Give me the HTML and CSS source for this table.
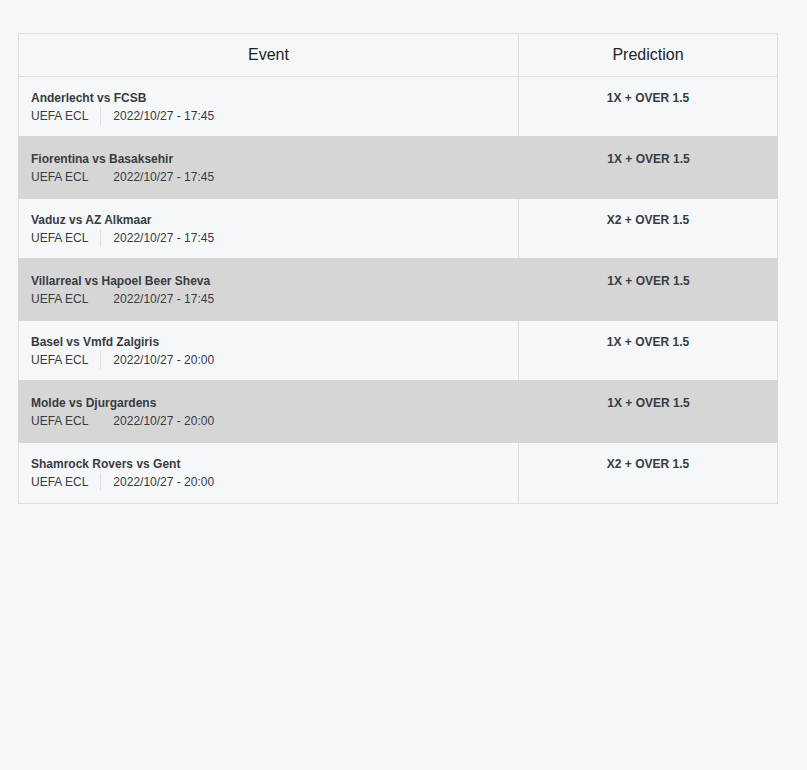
FILE: index.html
```html
<!DOCTYPE html>
<html>
<head>
<meta charset="utf-8">
<link rel="stylesheet" href="styles.css">
</head>
<body>
<div class="page">
  <div class="table">
    <div class="head">
      <div class="hcell event-col">Event</div>
      <div class="hcell pred-col">Prediction</div>
    </div>
    <div class="row">
      <div class="cell event-col"><div class="title">Anderlecht vs FCSB</div><div class="meta"><span class="league">UEFA ECL</span><span class="date">2022/10/27 - 17:45</span></div></div>
      <div class="cell pred-col">1X + OVER 1.5</div>
    </div>
    <div class="row alt">
      <div class="cell event-col"><div class="title">Fiorentina vs Basaksehir</div><div class="meta"><span class="league">UEFA ECL</span><span class="date">2022/10/27 - 17:45</span></div></div>
      <div class="cell pred-col">1X + OVER 1.5</div>
    </div>
    <div class="row">
      <div class="cell event-col"><div class="title">Vaduz vs AZ Alkmaar</div><div class="meta"><span class="league">UEFA ECL</span><span class="date">2022/10/27 - 17:45</span></div></div>
      <div class="cell pred-col">X2 + OVER 1.5</div>
    </div>
    <div class="row alt">
      <div class="cell event-col"><div class="title">Villarreal vs Hapoel Beer Sheva</div><div class="meta"><span class="league">UEFA ECL</span><span class="date">2022/10/27 - 17:45</span></div></div>
      <div class="cell pred-col">1X + OVER 1.5</div>
    </div>
    <div class="row">
      <div class="cell event-col"><div class="title">Basel vs Vmfd Zalgiris</div><div class="meta"><span class="league">UEFA ECL</span><span class="date">2022/10/27 - 20:00</span></div></div>
      <div class="cell pred-col">1X + OVER 1.5</div>
    </div>
    <div class="row alt">
      <div class="cell event-col"><div class="title">Molde vs Djurgardens</div><div class="meta"><span class="league">UEFA ECL</span><span class="date">2022/10/27 - 20:00</span></div></div>
      <div class="cell pred-col">1X + OVER 1.5</div>
    </div>
    <div class="row">
      <div class="cell event-col"><div class="title">Shamrock Rovers vs Gent</div><div class="meta"><span class="league">UEFA ECL</span><span class="date">2022/10/27 - 20:00</span></div></div>
      <div class="cell pred-col">X2 + OVER 1.5</div>
    </div>
  </div>
</div>
</body>
</html>
```
FILE: styles.css
```css
html, body {
  margin: 0;
  padding: 0;
  background: #f6f7f9;
  font-family: "Liberation Sans", Arial, sans-serif;
  color: #373c42;
}
.page {
  padding: 33px 29px 0 18px;
}
.table {
  width: 758px;
  border: 1px solid #dcdfe2;
}
.head {
  display: flex;
  height: 42px;
  border-bottom: 1px solid #dcdfe2;
}
.hcell {
  display: flex;
  align-items: center;
  justify-content: center;
  font-size: 16px;
  color: #212529;
}
.event-col {
  width: 499px;
  border-right: 1px solid #dcdfe2;
}
.pred-col {
  flex: 1;
}
.row {
  display: flex;
  height: 60px;
  border-top: 1px solid #dcdfe2;
}
.head + .row { border-top: 0; }
.row.alt {
  background: #d6d6d6;
  border-top-color: #d6d6d6;
  margin: -1px -1px 0 -1px;
  height: 62px;
  position: relative;
}
.row.alt + .row { border-top: 0; }
.cell {
  box-sizing: border-box;
  padding-top: 12px;
  font-size: 12px;
  line-height: 18px;
}
.cell.event-col {
  width: 500px;
  padding-left: 12px;
}
.row.alt .cell.event-col {
  border-right-color: transparent;
  width: 501px;
  padding-left: 13px;
}
.cell.pred-col {
  text-align: center;
  font-weight: bold;
}
.row.alt .cell { padding-top: 13px; }
.title {
  font-weight: bold;
}
.meta {
  display: flex;
}
.league {
  padding-right: 12px;
  border-right: 1px solid #dcdfe2;
}
.row.alt .league { border-right-color: transparent; }
.date {
  padding-left: 12px;
}
```
